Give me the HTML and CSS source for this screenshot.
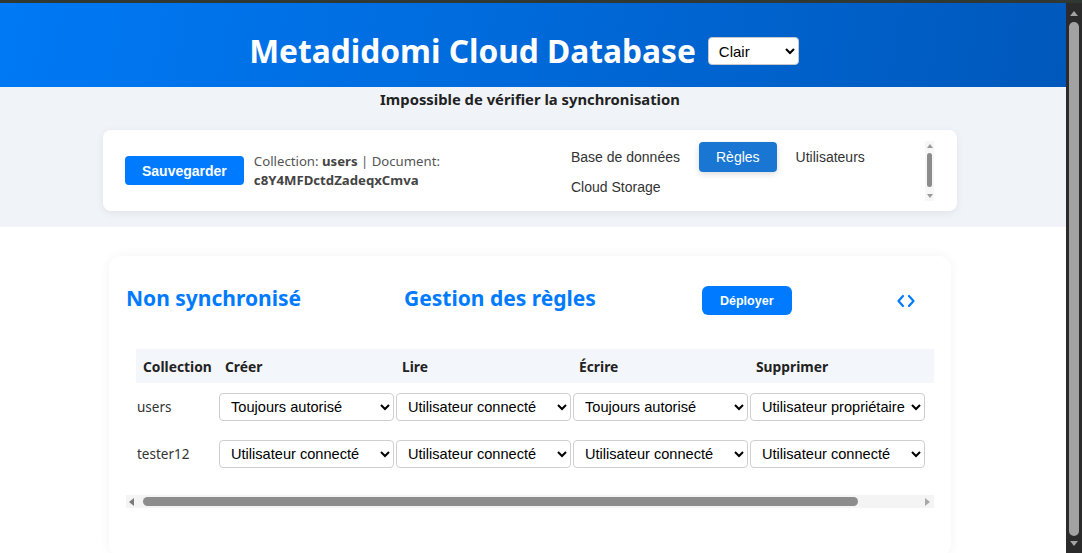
FILE: index.html
```html
<!DOCTYPE html>
<html lang="fr">
<head>
<meta charset="utf-8">
<title>Metadidomi Cloud Database</title>
<link rel="stylesheet" href="styles.css">
</head>
<body>
<div class="window">
  <div class="page">
    <header class="topbar">
      <div class="topbar-inner">
        <h1 class="title">Metadidomi Cloud Database</h1>
        <select class="theme-select">
          <option>Clair</option>
          <option>Sombre</option>
        </select>
      </div>
    </header>

    <section class="band">
      <p class="sync-status">Impossible de vérifier la synchronisation</p>
      <div class="toolbar">
        <div class="toolbar-left">
          <button class="btn btn-save">Sauvegarder</button>
          <div class="doc-info">Collection: <b>users</b> | Document: <b>c8Y4MFDctdZadeqxCmva</b></div>
        </div>
        <div class="tabs-box">
          <nav class="tabs">
            <button class="tab">Base de données</button>
            <button class="tab tab-active">Règles</button>
            <button class="tab">Utilisateurs</button>
            <button class="tab">Cloud Storage</button>
          </nav>
          <div class="nbar" aria-hidden="true">
            <span class="nbar-up"></span>
            <span class="nbar-thumb"></span>
            <span class="nbar-down"></span>
          </div>
        </div>
      </div>
    </section>

    <main class="main">
      <div class="card">
        <div class="card-head">
          <h2 class="card-title">Non synchronisé</h2>
          <h2 class="card-title">Gestion des règles</h2>
          <div><button class="btn btn-deploy">Déployer</button></div>
          <button class="icon-btn" aria-label="Code">
            <svg width="20" height="14" viewBox="0 0 20 14" fill="none" stroke="#007bff" stroke-width="2.2" stroke-linecap="round" stroke-linejoin="round"><path d="M7 2 L2.5 7 L7 12"/><path d="M13 2 L17.5 7 L13 12"/></svg>
          </button>
        </div>

        <div class="table-wrap">
          <div class="table-scroll">
            <table class="rules">
              <thead>
                <tr>
                  <th class="c-name">Collection</th>
                  <th class="c-rule">Créer</th>
                  <th class="c-rule">Lire</th>
                  <th class="c-rule">Écrire</th>
                  <th class="c-rule">Supprimer</th>
                  <th class="c-act"></th>
                </tr>
              </thead>
              <tbody>
                <tr>
                  <td class="name">users</td>
                  <td><select class="rule"><option>Toujours autorisé</option><option>Utilisateur connecté</option><option>Utilisateur propriétaire</option></select></td>
                  <td><select class="rule"><option>Utilisateur connecté</option><option>Toujours autorisé</option><option>Utilisateur propriétaire</option></select></td>
                  <td><select class="rule"><option>Toujours autorisé</option><option>Utilisateur connecté</option><option>Utilisateur propriétaire</option></select></td>
                  <td><select class="rule"><option>Utilisateur propriétaire</option><option>Toujours autorisé</option><option>Utilisateur connecté</option></select></td>
                  <td></td>
                </tr>
                <tr>
                  <td class="name">tester12</td>
                  <td><select class="rule"><option>Utilisateur connecté</option><option>Toujours autorisé</option><option>Utilisateur propriétaire</option></select></td>
                  <td><select class="rule"><option>Utilisateur connecté</option><option>Toujours autorisé</option><option>Utilisateur propriétaire</option></select></td>
                  <td><select class="rule"><option>Utilisateur connecté</option><option>Toujours autorisé</option><option>Utilisateur propriétaire</option></select></td>
                  <td><select class="rule"><option>Utilisateur connecté</option><option>Toujours autorisé</option><option>Utilisateur propriétaire</option></select></td>
                  <td></td>
                </tr>
              </tbody>
            </table>
          </div>
          <div class="hbar" aria-hidden="true">
            <span class="hbar-left"></span>
            <span class="hbar-track"><span class="hbar-thumb"></span></span>
            <span class="hbar-right"></span>
          </div>
        </div>
      </div>
    </main>
  </div>

  <div class="vbar" aria-hidden="true">
    <span class="vbar-up"></span>
    <span class="vbar-track"><span class="vbar-thumb"></span></span>
    <span class="vbar-down"></span>
  </div>
</div>
</body>
</html>
```

FILE: styles.css
```css
* { box-sizing: border-box; }

html, body {
  margin: 0;
  height: 100%;
  overflow: hidden;
}

body {
  border-top: 3px solid #2f3832;
  background: #2b2b2b;
  font-family: "Noto Sans", "Liberation Sans", sans-serif;
  color: #333;
}

.window {
  display: flex;
  height: calc(100vh - 3px);
}

.page {
  flex: 1;
  min-width: 0;
  overflow: hidden;
  background: #ffffff;
}

/* fake window scrollbar */
.vbar {
  width: 16px;
  flex: none;
  background: #2b2b2b;
  display: flex;
  flex-direction: column;
  align-items: center;
}
.vbar-up, .vbar-down {
  flex: none;
  height: 17px;
  width: 16px;
  display: flex;
  align-items: center;
  justify-content: center;
}
.vbar-up::before {
  content: "";
  border-left: 4px solid transparent;
  border-right: 4px solid transparent;
  border-bottom: 5px solid #a3a3a3;
  margin-top: 3px;
}
.vbar-down::before {
  content: "";
  border-left: 4px solid transparent;
  border-right: 4px solid transparent;
  border-top: 5px solid #a3a3a3;
  margin-bottom: 2px;
}
.vbar-track {
  flex: 1;
  width: 16px;
  padding: 2px 3px 0;
  display: flex;
}
.vbar-thumb {
  flex: 1;
  background: #a2a2a2;
  border-radius: 5px;
}

/* Header */
.topbar {
  height: 84px;
  background: linear-gradient(100deg, #0079f5 0%, #006bdc 45%, #0058bb 100%);
  box-shadow: 0 2px 4px rgba(0, 0, 0, 0.08);
  padding: 12px 18px 0 0;
  display: flex;
  justify-content: center;
  align-items: center;
}
.topbar-inner {
  display: flex;
  align-items: center;
  gap: 12px;
}
.title {
  margin: 0;
  font-family: "Noto Sans", sans-serif;
  font-size: 31.7px;
  font-weight: 700;
  color: #ffffff;
  line-height: 40px;
}
.theme-select {
  width: 91px;
  height: 28px;
  font-family: "Liberation Sans", Arial, sans-serif;
  font-size: 15px;
  color: #000;
  background: #fff;
  border: 1px solid #c8c8c8;
  border-radius: 4px;
  padding: 0 4px 0 6px;
}

/* Band */
.band {
  background: #f0f4f9;
  padding: 2px 6px 16px 0;
}
.sync-status {
  margin: 0 0 21px;
  text-align: center;
  font-size: 14.8px;
  line-height: 20px;
  font-weight: 700;
  color: #222;
}
.toolbar {
  width: 854px;
  height: 81px;
  margin: 0 auto;
  background: #fff;
  border-radius: 8px;
  box-shadow: 0 2px 8px rgba(0, 0, 0, 0.07);
  padding: 10px 23px 10px 22px;
  display: flex;
  align-items: center;
  justify-content: space-between;
}
.toolbar-left {
  display: flex;
  align-items: center;
  gap: 10px;
}
.btn {
  border: none;
  color: #fff;
  background: #007bff;
  font-family: "Liberation Sans", Arial, sans-serif;
  font-weight: 700;
  cursor: pointer;
}
.btn-save {
  height: 29px;
  padding: 0 17px;
  font-size: 14px;
  border-radius: 4px;
}
.doc-info {
  width: 196px;
  font-size: 13.2px;
  line-height: 19px;
  color: #555;
}
.doc-info b { color: #444; }

.tabs-box {
  display: flex;
  width: 379px;
  height: 60px;
}
.tabs {
  flex: 1;
  overflow: hidden;
  display: flex;
  flex-wrap: wrap;
  align-content: flex-start;
  column-gap: 3px;
  padding-top: 1px;
}
.tab {
  height: 30px;
  padding: 0 16px;
  border: none;
  border-radius: 4px;
  background: transparent;
  font-family: "Liberation Sans", Arial, sans-serif;
  font-size: 14px;
  color: #333;
  cursor: pointer;
}
.tab-active {
  padding: 0 17px;
  background: #1976d2;
  color: #fff;
  box-shadow: 0 2px 6px rgba(0, 0, 0, 0.15);
}

/* fake nav scrollbar */
.nbar {
  width: 9px;
  flex: none;
  background: #f7f7f7;
  display: flex;
  flex-direction: column;
  align-items: center;
}
.nbar-up, .nbar-down {
  height: 10px;
  display: flex;
  align-items: center;
  justify-content: center;
}
.nbar-up::before {
  content: "";
  border-left: 3px solid transparent;
  border-right: 3px solid transparent;
  border-bottom: 4px solid #9a9a9a;
}
.nbar-down::before {
  content: "";
  border-left: 3px solid transparent;
  border-right: 3px solid transparent;
  border-top: 4px solid #9a9a9a;
}
.nbar-thumb {
  width: 5px;
  height: 34px;
  margin: 2px 0 4px;
  background: #8c8c8c;
  border-radius: 3px;
}

/* Main */
.main {
  background: #fff;
  padding: 29px 6px 0 0;
}
.card {
  width: 842px;
  min-height: 300px;
  margin: 0 auto;
  background: #fff;
  border-radius: 12px;
  box-shadow: 0 0 12px rgba(0, 0, 0, 0.05);
  padding: 30px 17px 20px;
}
.card-head {
  display: grid;
  grid-template-columns: 278px 298px 175px 57px;
  align-items: center;
  height: 29px;
  margin-bottom: 24px;
}
.card-title {
  margin: -6px 0 0;
  font-size: 21px;
  font-weight: 700;
  color: #007bff;
  line-height: 28px;
}
.btn-deploy {
  height: 29px;
  padding: 0 18px;
  font-size: 12.5px;
  border-radius: 6px;
}
.icon-btn {
  width: 57px;
  height: 29px;
  border: none;
  background: transparent;
  display: flex;
  align-items: center;
  justify-content: center;
  padding: 0;
  cursor: pointer;
}

.table-wrap {
  width: 808px;
}
.table-scroll {
  overflow: hidden;
  padding: 10px 0 0 10px;
}

.rules {
  border-collapse: collapse;
  table-layout: fixed;
  width: 890px;
}
.c-name { width: 82px; }
.c-rule { width: 177px; }
.c-act { width: 100px; }
.rules thead tr { background: #f3f6fa; }
.rules th {
  text-align: left;
  font-size: 13.8px;
  font-weight: 700;
  color: #222;
  height: 34px;
  padding: 0 8px 0 7px;
  white-space: nowrap;
}
.rules td {
  padding: 10px 1px 9px;
  height: 47px;
}
.rules td.name {
  font-size: 13.5px;
  color: #333;
  padding-left: 1px;
}
.rule {
  width: 100%;
  height: 28px;
  font-family: "Liberation Sans", Arial, sans-serif;
  font-size: 14.6px;
  color: #000;
  background: #fff;
  border: 1px solid #cfcfcf;
  border-radius: 4px;
  padding: 0 2px 0 7px;
}

/* fake horizontal scrollbar */
.hbar {
  display: flex;
  height: 13px;
  margin-top: 18px;
  background: #f4f4f4;
}
.hbar-left, .hbar-right {
  width: 15px;
  flex: none;
  display: flex;
  align-items: center;
  justify-content: center;
}
.hbar-left::before {
  content: "";
  border-top: 4px solid transparent;
  border-bottom: 4px solid transparent;
  border-right: 5px solid #7a7a7a;
  margin-right: 4px;
}
.hbar-right::before {
  content: "";
  border-top: 4px solid transparent;
  border-bottom: 4px solid transparent;
  border-left: 5px solid #a8a8a8;
  margin-left: 2px;
}
.hbar-track {
  flex: 1;
  display: flex;
  align-items: center;
}
.hbar-thumb {
  width: 715px;
  height: 9px;
  margin-left: 2px;
  background: #8d8d8d;
  border-radius: 5px;
}
```
